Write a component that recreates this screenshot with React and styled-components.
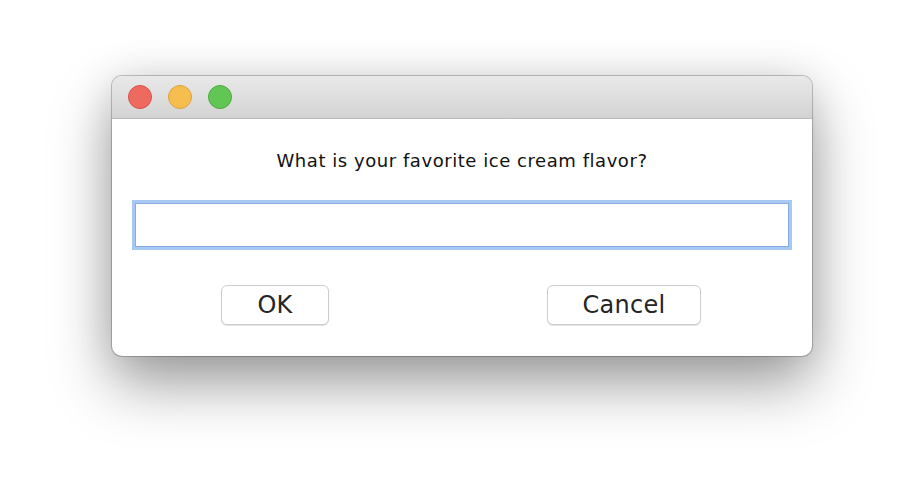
import React from "react";
import styled, { createGlobalStyle } from "styled-components";

const Global = createGlobalStyle`
  html, body { margin: 0; padding: 0; background: #ffffff; }
  body { font-family: "DejaVu Sans", "Liberation Sans", sans-serif; }
`;

const Page = styled.div`
  width: 924px;
  height: 504px;
  display: flex;
  justify-content: center;
  align-items: flex-start;
  padding-top: 76px;
  box-sizing: border-box;
  overflow: hidden;
`;

const Window = styled.div`
  width: 700px;
  height: 280px;
  border-radius: 10px;
  background: #ffffff;
  display: flex;
  flex-direction: column;
  overflow: hidden;
  box-shadow: 0 0 0 1px rgba(0, 0, 0, 0.22), 0 28px 60px rgba(0, 0, 0, 0.38),
    0 0 40px rgba(0, 0, 0, 0.1);
`;

const TitleBar = styled.div`
  height: 42px;
  flex: none;
  display: flex;
  align-items: center;
  gap: 16px;
  padding-left: 16px;
  background: linear-gradient(#e9e9e9, #d3d3d3);
  border-bottom: 1px solid #b9b9b9;
`;

const Light = styled.span`
  width: 24px;
  height: 24px;
  box-sizing: border-box;
  border-radius: 50%;
  background: ${(p) => p.$fill};
  border: 1px solid ${(p) => p.$edge};
`;

const Body = styled.div`
  flex: 1;
  display: flex;
  flex-direction: column;
  padding: 31px 23px 0;
`;

const Prompt = styled.div`
  font-family: "DejaVu Sans", sans-serif;
  font-size: 18px;
  letter-spacing: 0.55px;
  line-height: 22px;
  color: #111111;
  text-align: center;
`;

const Field = styled.input`
  margin-top: 31px;
  height: 44px;
  width: 100%;
  box-sizing: border-box;
  border: 1px solid #89ade2;
  box-shadow: 0 0 0 3px #a8c9f4;
  outline: none;
  background: #ffffff;
  font-size: 18px;
  font-family: inherit;
  padding: 0 6px;
`;

const ButtonRow = styled.div`
  margin-top: 38px;
  display: flex;
  gap: 218px;
  padding-left: 86px;
`;

const Button = styled.button`
  width: ${(p) => p.$w}px;
  height: 40px;
  box-sizing: border-box;
  border: 1px solid #cdcdcd;
  border-radius: 6px;
  background: #ffffff;
  box-shadow: 0 1px 1px rgba(0, 0, 0, 0.12);
  font-family: "DejaVu Sans", sans-serif;
  font-size: 24px;
  letter-spacing: 0.3px;
  color: #252525;
  padding: 0;
  display: flex;
  align-items: center;
  justify-content: center;
`;

export default function App() {
  return (
    <>
      <Global />
      <Page>
        <Window>
          <TitleBar>
            <Light $fill="#ee6a5e" $edge="#d55248" />
            <Light $fill="#f6be4f" $edge="#dba23c" />
            <Light $fill="#62c655" $edge="#4eaa3e" />
          </TitleBar>
          <Body>
            <Prompt>What is your favorite ice cream flavor?</Prompt>
            <Field type="text" />
            <ButtonRow>
              <Button $w={108}>OK</Button>
              <Button $w={154}>Cancel</Button>
            </ButtonRow>
          </Body>
        </Window>
      </Page>
    </>
  );
}
